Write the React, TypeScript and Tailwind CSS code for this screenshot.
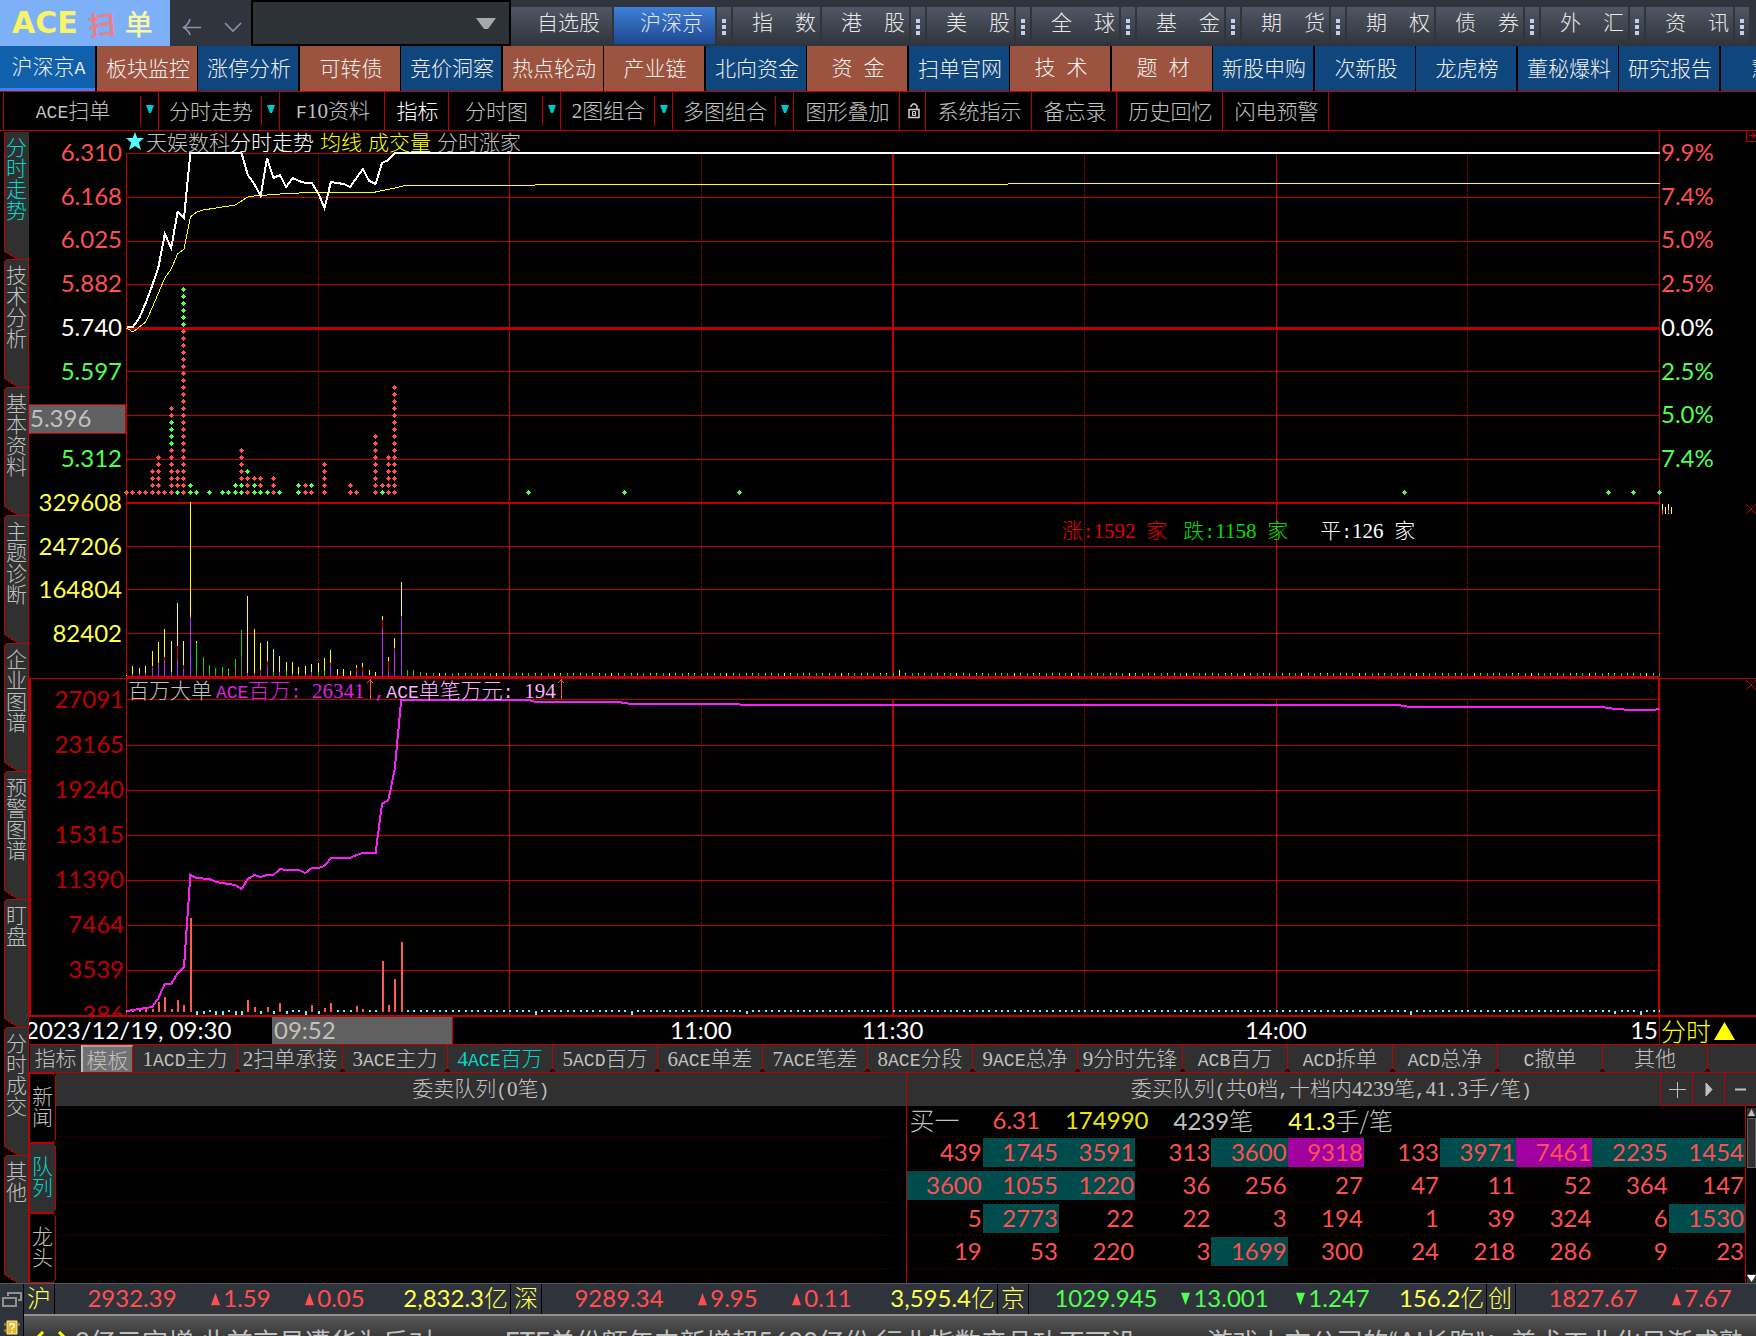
import { Fragment } from 'react'
import clsx from 'clsx'

const X_STEP = 1533 / 240
const W = 1534

const RED = '#c00000'
const VOL: Record<string, string> = { Y: '#ffff00', G: '#00e000', P: '#b030ff', R: '#e00000', O: '#708000' }

// ── Price pane data: [minute, y] ────────────────────────
const PRICE: [number, number][] = [
  [0, 196], [1, 196], [2, 187], [3, 172], [4, 155], [5, 136], [6, 103], [7, 117], [8, 81], [9, 87], [10, 22], [18, 22],
  [19, 44], [20, 53], [21, 65], [22, 27], [23, 47], [24, 44], [25, 56], [26, 47], [27, 50], [28, 52], [29, 52], [30, 62],
  [31, 77], [32, 51], [33, 52], [34, 53], [35, 56], [36, 47], [37, 38], [38, 50], [39, 53], [40, 32], [41, 29], [42, 22],
  [240, 22],
]
const AVERAGE: [number, number][] = [
  [0, 197], [1, 201], [2, 196], [3, 191], [4, 177], [5, 162], [6, 147], [7, 138], [8, 123], [9, 118], [10, 86], [11, 81],
  [12, 79], [14, 77], [17, 74], [19, 66], [20, 65], [24, 63], [30, 61], [39, 61], [42, 57], [44, 54], [64, 54],
  [65, 53], [138, 53], [140, 52], [240, 52],
]
const DOTS: [number, string][] = [
  [0, 'R'], [1, 'R'], [2, 'R'], [3, 'R'], [4, 'RRRR'], [5, 'RRRRRR'], [6, 'R'], [7, 'RRRRRRRGGGGRR'], [8, 'GRRR'],
  [9, 'R'.repeat(24) + 'GGGGGG'], [10, 'GG'], [11, 'G'], [13, 'G'], [15, 'G'], [16, 'G'], [17, 'GG'], [18, 'GGRRRRR'],
  [19, 'RRRG'], [20, 'GGR'], [21, 'GRR'], [22, 'G'], [23, 'RRR'], [24, 'G'], [27, 'GG'], [28, 'RR'], [29, 'RG'],
  [31, 'RRRRR'], [35, 'RR'], [36, 'R'], [39, 'RRRRRRRRR'], [40, 'GR'], [41, 'RRRRRR'], [42, 'R'.repeat(16)],
  [63, 'G'], [78, 'G'], [96, 'G'], [200, 'G'], [232, 'G'], [236, 'G'], [240, 'G'],
]

// ── Volume pane: stacked tops per minute ────────────────
const VOLUME: [number, [string, number][]][] = [
  [0, [['Y', 1]]], [1, [['G', 2], ['Y', 10]]], [2, [['P', 3], ['Y', 8]]], [3, [['P', 3], ['Y', 10]]],
  [4, [['P', 8], ['R', 10], ['Y', 25]]], [5, [['P', 12], ['R', 13], ['Y', 34]]], [6, [['P', 16], ['R', 19], ['Y', 47]]],
  [7, [['P', 4], ['Y', 35]]], [8, [['P', 17], ['R', 30], ['Y', 73]]], [9, [['P', 7], ['R', 11], ['Y', 35]]],
  [10, [['P', 59], ['Y', 174]]], [11, [['O', 8], ['G', 33], ['Y', 35]]], [12, [['O', 5], ['G', 19]]],
  [13, [['O', 3], ['G', 11]]], [14, [['O', 3], ['G', 8]]], [15, [['O', 4], ['G', 9]]], [16, [['G', 6], ['Y', 7]]],
  [17, [['O', 8], ['G', 17]]], [18, [['O', 20], ['G', 46]]], [19, [['P', 3], ['Y', 80]]], [20, [['P', 3], ['Y', 47]]],
  [21, [['P', 2], ['R', 6], ['Y', 33]]], [22, [['P', 9], ['R', 15], ['Y', 35]]], [23, [['G', 4], ['Y', 27]]],
  [24, [['P', 4], ['Y', 20]]], [25, [['G', 5], ['Y', 14]]], [26, [['P', 2], ['Y', 14]]], [27, [['G', 2], ['Y', 9]]],
  [28, [['P', 2], ['Y', 10]]], [29, [['P', 4], ['Y', 12]]], [30, [['G', 4], ['Y', 13]]], [31, [['G', 5], ['Y', 18]]],
  [32, [['P', 11], ['R', 13], ['Y', 26]]], [33, [['R', 1], ['Y', 7]]], [34, [['Y', 7]]], [35, [['P', 1], ['Y', 5]]],
  [36, [['P', 4], ['R', 8], ['Y', 11]]], [37, [['P', 4], ['R', 9], ['Y', 13]]], [38, [['R', 1], ['Y', 6]]],
  [39, [['Y', 4]]], [40, [['P', 48], ['R', 56], ['Y', 60]]], [41, [['P', 6], ['R', 15], ['Y', 19]]],
  [42, [['P', 26], ['R', 28], ['Y', 38]]], [43, [['P', 59], ['R', 60], ['Y', 94]]], [44, [['G', 6]]], [45, [['G', 6]]],
  [46, [['G', 4]]],
]

// ── Big-order pane ──────────────────────────────────────
const ORDERS: [number, number][] = [
  [0, 333], [1, 332], [2, 331], [3, 330], [4, 329], [5, 320], [6, 306], [7, 306], [8, 295], [9, 289], [10, 197], [11, 200],
  [13, 201], [14, 204], [16, 206], [17, 207], [18, 211], [19, 201], [20, 197], [21, 199], [22, 197], [23, 197], [24, 191],
  [25, 192], [27, 192], [28, 195], [29, 190], [30, 190], [31, 188], [32, 180], [35, 180], [36, 177], [37, 175], [39, 175],
  [40, 126], [41, 122], [42, 91], [43, 22], [63, 22], [64, 24], [77, 24], [79, 26], [95, 26], [97, 27], [199, 27],
  [201, 29], [231, 29], [233, 31], [236, 32], [239, 32], [240, 31],
]
const ORDER_BARS: [number, number][] = [
  [1, 3], [2, 2], [3, 3], [4, 3], [5, 10], [6, 15], [7, 3], [8, 12], [9, 7], [10, 94], [19, 12], [20, 5], [22, 5], [24, 9],
  [29, 7], [31, 4], [32, 9], [36, 6], [37, 3], [40, 51], [41, 7], [42, 33], [43, 70],
]
const ORDER_DIPS: Record<number, number> = {
  11: 5, 12: 3, 14: 4, 15: 4, 17: 4, 18: 5, 21: 3, 23: 3, 25: 3, 28: 5, 30: 3, 64: 5, 79: 4, 97: 3, 201: 4, 233: 3, 237: 4,
}

const MARKETS = [
  { name: '自选股', wide: true },
  { name: '沪深京', wide: true, active: true, dots: true },
  { name: '指数' },
  { name: '港股', dots: true },
  { name: '美股', dots: true },
  { name: '全球', dots: true },
  { name: '基金', dots: true },
  { name: '期货', dots: true },
  { name: '期权' },
  { name: '债券', dots: true },
  { name: '外汇', dots: true },
  { name: '资讯', dots: true },
]

const BOARDS = [
  ['沪深京A', 'active'], ['板块监控', 'brown'], ['涨停分析', 'blue'], ['可转债', 'brown'], ['竞价洞察', 'blue'],
  ['热点轮动', 'brown'], ['产业链', 'brown'], ['北向资金', 'blue'], ['资 金', 'brown'], ['扫单官网', 'blue'],
  ['技 术', 'brown'], ['题 材', 'brown'], ['新股申购', 'blue'], ['次新股', 'blue'], ['龙虎榜', 'blue'],
  ['董秘爆料', 'blue'], ['研究报告', 'blue'], ['慧博', 'blue'],
]

const TOOLS = [
  { name: 'ACE扫单', width: 'w-[156px]', menu: true },
  { name: '分时走势', width: 'w-[121px]', menu: true },
  { name: 'F10资料', width: 'w-[105px]' },
  { name: '指标', width: 'w-[64px]', active: true },
  { name: '分时图', width: 'w-[112px]', menu: true },
  { name: '2图组合', width: 'w-[112px]', menu: true },
  { name: '多图组合', width: 'w-[121px]', menu: true },
  { name: '图形叠加', width: 'w-[106px]' },
  { name: 'lock', width: 'w-[26px]' },
  { name: '系统指示', width: 'w-[106px]' },
  { name: '备忘录', width: 'w-[85px]' },
  { name: '历史回忆', width: 'w-[106px]' },
  { name: '闪电预警', width: 'w-[106px]' },
]

const SIDE_TABS = ['分时走势', '技术分析', '基本资料', '主题诊断', '企业图谱', '预警图谱', '盯盘', '分时成交', '其他']
const TEMPLATES = [
  '1ACD主力', '2扫单承接', '3ACE主力', '4ACE百万', '5ACD百万', '6ACE单差', '7ACE笔差', '8ACE分段', '9ACE总净',
  '9分时先锋', 'ACB百万', 'ACD拆单', 'ACD总净', 'C撤单', '其他',
]

const AXIS_LEFT = [
  ['6.310', 'text-[#ff5050]'], ['6.168', 'text-[#ff5050]'], ['6.025', 'text-[#ff5050]'], ['5.882', 'text-[#ff5050]'],
  ['5.740', 'text-white'], ['5.597', 'text-[#50ff50]'], ['', ''], ['5.312', 'text-[#50ff50]'],
  ['329608', 'text-[#ffff50]'], ['247206', 'text-[#ffff50]'], ['164804', 'text-[#ffff50]'], ['82402', 'text-[#ffff50]'],
]
const AXIS_RIGHT = [
  ['9.9%', 'text-[#ff5050]'], ['7.4%', 'text-[#ff5050]'], ['5.0%', 'text-[#ff5050]'], ['2.5%', 'text-[#ff5050]'],
  ['0.0%', 'text-white'], ['2.5%', 'text-[#50ff50]'], ['5.0%', 'text-[#50ff50]'], ['7.4%', 'text-[#50ff50]'],
  ['', ''], ['', ''], ['', ''], ['', ''],
]
const AXIS_ORDERS = ['27091', '23165', '19240', '15315', '11390', '7464', '3539', '386']

// t = large lot, p = very large lot
const QUEUE = [
  ['439', '1745t', '3591t', '313', '3600t', '9318p', '133', '3971t', '7461p', '2235t', '1454t'],
  ['3600t', '1055t', '1220t', '36', '256', '27', '47', '11', '52', '364', '147'],
  ['5', '2773t', '22', '22', '3', '194', '1', '39', '324', '6', '1530t'],
  ['19', '53', '220', '3', '1699t', '300', '24', '218', '286', '9', '23'],
]

const INDICES = [
  { name: '沪', price: '2932.39', change: '1.59', pct: '0.05', amount: '2,832.3亿', up: true, cols: 'grid-cols-[154px_64px_124px_1fr]' },
  { name: '深', price: '9289.34', change: '9.95', pct: '0.11', amount: '3,595.4亿', up: true, cols: 'grid-cols-[154px_64px_124px_1fr]' },
  { name: '京', price: '1029.945', change: '13.001', pct: '1.247', amount: '156.2亿', up: false, cols: 'grid-cols-[154px_84px_132px_1fr]' },
  { name: '创', price: '1827.67', change: '7.67', pct: '0.42', amount: '1,402.6亿', up: true, cols: 'grid-cols-[154px_64px_124px_1fr]' },
]

const toPoints = (data: [number, number][]) => data.map(([i, y]) => `${i * X_STEP + 0.5},${y}`).join(' ')

// Digits and Latin letters are set in half-width faces next to the Chinese glyphs
function Mixed({ children }: { children: string }) {
  const parts = children.match(/\d+|[\x20-\x2f\x3a-\x7e]+|[^\x20-\x7e]+/g) ?? []
  return (
    <span className="whitespace-pre">
      {parts.map((part, i) => (
        <span
          key={i}
          className={clsx(
            /^\d/.test(part) && "font-['Liberation_Serif',serif] text-[21px]",
            /^[\x20-\x2f\x3a-\x7e]/.test(part) && "font-['Liberation_Mono',monospace] text-[18px]",
          )}
        >
          {part}
        </span>
      ))}
    </span>
  )
}

function TimeGrid({ top, height }: { top: number; height: number }) {
  return (
    <>
      {[1, 2, 3, 4, 5, 6, 7].map((n) => (
        <line
          key={n}
          x1={Math.round(n * 191.6) + 0.5}
          x2={Math.round(n * 191.6) + 0.5}
          y1={top}
          y2={height}
          stroke={RED}
          strokeWidth={n === 4 ? 2 : 1}
          strokeDasharray={n % 2 ? '1 1' : undefined}
        />
      ))}
    </>
  )
}

function PriceChart() {
  return (
    <svg
      className="block h-[547px] w-full overflow-visible"
      viewBox={`0 0 ${W} 547`}
      preserveAspectRatio="none"
      shapeRendering="crispEdges"
      role="img"
      aria-label="分时走势"
    >
      <TimeGrid top={22} height={546} />
      {[22, 66, 110, 153, 240, 284, 328, 415, 458, 502].map((y) => (
        <line key={y} x1={0} x2={W} y1={y + 0.5} y2={y + 0.5} stroke={RED} />
      ))}
      <line x1={0} x2={W} y1={197.5} y2={197.5} stroke={RED} strokeWidth={3} />
      <line x1={0} x2={W} y1={372} y2={372} stroke={RED} strokeWidth={2} />
      <line x1={0} x2={W} y1={546} y2={546} stroke={RED} strokeWidth={2} />
      <line x1={0.5} x2={0.5} y1={22} y2={547} stroke={RED} />
      <line x1={1533.5} x2={1533.5} y1={0} y2={547} stroke={RED} />

      {/* ── Volume ── */}
      {VOLUME.map(([i, stack]) =>
        stack.map(([c, h], k) => {
          const base = k ? stack[k - 1][1] : 0
          return <rect key={`${i}-${k}`} x={Math.round(i * X_STEP)} y={545 - h} width={1} height={h - base} fill={VOL[c]} />
        }),
      )}
      {Array.from({ length: 194 }, (_, k) => k + 47).map((i) => (
        <Fragment key={i}>
          <rect x={Math.round(i * X_STEP)} y={543} width={1} height={2} fill={i % 9 === 4 ? VOL.Y : VOL.G} />
          <rect
            x={Math.round(i * X_STEP)}
            y={i === 121 ? 539 : 542}
            width={1}
            height={i === 121 ? 4 : 1}
            fill={i % 3 ? VOL.Y : VOL.G}
          />
        </Fragment>
      ))}

      {/* ── Order dots ── */}
      {DOTS.map(([i, column]) =>
        column.split('').map((c, row) => {
          const x = Math.round(i * X_STEP)
          const y = 361 - row * 7
          return (
            <path
              key={`${i}-${row}`}
              d={`M${x - 1} ${y - 1}h1v-1h1v1h1v1h1v1h-1v1h-1v1h-1v-1h-1v-1h-1v-1h1z`}
              fill={c === 'R' ? '#ff5050' : '#50ff50'}
            />
          )
        }),
      )}

      <polyline points={toPoints(AVERAGE)} fill="none" stroke="#ffff00" strokeWidth={1} />
      <polyline points={toPoints(PRICE)} fill="none" stroke="#ffffff" strokeWidth={2} />
    </svg>
  )
}

function OrderChart() {
  return (
    <svg
      className="block h-[338px] w-full"
      viewBox={`0 1 ${W} 338`}
      preserveAspectRatio="none"
      shapeRendering="crispEdges"
      role="img"
      aria-label="百万大单"
    >
      <TimeGrid top={21} height={338} />
      {[21, 67, 112, 157, 202, 247, 292].map((y) => (
        <line key={y} x1={0} x2={W} y1={y + 0.5} y2={y + 0.5} stroke={RED} />
      ))}
      <line x1={0.5} x2={0.5} y1={0} y2={339} stroke={RED} />
      <line x1={1533} x2={1533} y1={0} y2={339} stroke={RED} strokeWidth={2} />
      {Array.from({ length: 241 }, (_, i) => i)
        .filter((i) => !ORDER_BARS.some(([b]) => b === i))
        .map((i) => (
          <rect
            key={i}
            x={Math.round(i * X_STEP)}
            y={ORDER_DIPS[i] ? 333 : 332}
            width={2}
            height={ORDER_DIPS[i] ?? 2}
            fill="#50ffff"
          />
        ))}
      {ORDER_BARS.map(([i, h]) => (
        <rect key={i} x={Math.round(i * X_STEP)} y={334 - h} width={2} height={h} fill="#ff5a50" />
      ))}
      <polyline points={toPoints(ORDERS)} fill="none" stroke="#f820f8" strokeWidth={2} />
    </svg>
  )
}

function TopBar() {
  return (
    <header className="flex h-[46px] shrink-0 overflow-hidden bg-[#2f343d]">
      <div className="flex w-[170px] shrink-0 items-center gap-[10px] bg-[#7eb0f8] pl-[12px] leading-none">
        <span className="font-['DejaVu_Sans',sans-serif] text-[30px] font-bold text-[#f8f468]">ACE</span>
        <span className="-rotate-6 font-['Noto_Sans_CJK_SC',sans-serif] text-[27px] font-bold text-[#e8808c]">扫</span>
        <span className="font-['Noto_Sans_CJK_SC',sans-serif] text-[28px] font-medium text-[#f8f8a0]">单</span>
      </div>
      <div className="flex w-[81px] shrink-0 items-center justify-center gap-[22px] pt-[8px] pl-[3px]">
        <button aria-label="后退">
          <svg width="20" height="18" viewBox="0 0 20 18" fill="none" stroke="#8a93aa" strokeWidth="1.6">
            <path d="M19 9.500H2M8 1C7 5 4 8 1.500 9.500C4 11 7 13 8 17" />
          </svg>
        </button>
        <button aria-label="更多">
          <svg width="18" height="12" viewBox="0 0 18 12" fill="none" stroke="#8a93aa" strokeWidth="1.600">
            <path d="M1 2L9 10L17 2" />
          </svg>
        </button>
      </div>
      <div className="relative w-[260px] shrink-0 border-2 border-black bg-[#2d3236]">
        <select aria-label="代码" className="h-full w-full appearance-none bg-transparent" defaultValue="">
          <option value=""></option>
        </select>
        <svg className="pointer-events-none absolute top-[16px] right-[13px]" width="20" height="11" viewBox="0 0 20 11">
          <path d="M0 0H20L12 11H8Z" fill="#a8a8a8" />
        </svg>
      </div>
      <nav className="flex grow gap-[2px] pt-[7px] pb-[2px]">
        {MARKETS.map((m) => (
          <Fragment key={m.name}>
            <button
              className={clsx(
                'flex h-[37px] shrink-0 items-center pb-[7px] text-[21px] text-[#e8e8e8]',
                m.wide ? 'w-[101px] justify-end pr-[12px]' : 'w-[87px] justify-between pr-[4px] pl-[19px]',
                m.active ? 'bg-linear-to-b from-[#4080d8] to-[#1c4890]' : 'bg-linear-to-b from-[#505764] to-[#31353d]',
              )}
            >
              {m.wide ? m.name : m.name.split('').map((c) => <span key={c}>{c}</span>)}
            </button>
            {m.dots && (
              <button
                aria-label={`${m.name}菜单`}
                className="flex h-[37px] w-[14px] shrink-0 flex-col items-center justify-center gap-[2px] bg-linear-to-b from-[#505764] to-[#31353d] pt-[3px]"
              >
                <span className="size-[4px] bg-[#c0d0f0]" />
                <span className="size-[4px] bg-[#c0d0f0]" />
                <span className="size-[4px] bg-[#c0d0f0]" />
              </button>
            )}
          </Fragment>
        ))}
      </nav>
    </header>
  )
}

function BoardBar() {
  return (
    <nav className="flex h-[45px] shrink-0 overflow-hidden">
      {BOARDS.map(([name, tone]) => (
        <button
          key={name}
          className={clsx(
            'shrink-0 pb-[2px] pl-[2px] text-[21px] text-[#f0f0f0] odd:mr-[2px] even:mr-px',
            tone === 'active' && 'w-[95px] border-b-[3px] border-[#3a82f8] bg-[#1060ac] pb-0',
            tone === 'brown' && 'w-[100px] bg-[#9c5440]',
            tone === 'blue' && 'w-[100px] bg-[#0f467e]',
          )}
        >
          <Mixed>{name}</Mixed>
        </button>
      ))}
    </nav>
  )
}

function ToolBar() {
  return (
    <nav className="flex h-[40px] shrink-0 overflow-hidden border-y border-[#c00000] pl-[3px] text-[21px]">
      {TOOLS.map((t, i) => (
        <div key={t.name} className={clsx('flex shrink-0 items-center border-r border-[#c00000]', t.width, i === 0 && 'border-l')}>
          <button className={clsx('flex h-full grow items-center justify-center pb-px pl-[2px]', t.active ? 'text-white' : 'text-[#c0c0c0]')}>
            {t.name === 'lock' ? (
              <svg width="12" height="16" viewBox="0 0 12 16" fill="none" stroke="#d0d0d0" strokeWidth="1.500" aria-label="锁定">
                <path d="M1 6.500H11V14.500H1ZM3 4V3L5 1H7L9 3V6.500" />
                <path d="M4.500 8.500H7.500V12.500H4.500ZM6 10V11.500" strokeWidth="1" />
              </svg>
            ) : (
              <Mixed>{t.name}</Mixed>
            )}
          </button>
          {t.menu && (
            <button
              aria-label={`${t.name}菜单`}
              className="flex h-[30px] w-[18px] items-center justify-center border-l border-[#c00000] pb-[4px]"
            >
              <svg width="8" height="8" viewBox="0 0 8 8">
                <path d="M0 0H8L5 8H3Z" fill="#00c8c8" />
              </svg>
            </button>
          )}
        </div>
      ))}
    </nav>
  )
}

function SideTabs() {
  return (
    <nav className="flex w-[29px] shrink-0 flex-col pl-[4px]">
      {SIDE_TABS.map((name, i) => (
        <button
          key={name}
          className={clsx(
            'relative flex h-[128px] w-full shrink-0 justify-center pt-[5px] text-[21px] leading-[21px]',
            i === 0 ? 'text-[#00d8d0]' : 'text-[#c0c0c0]',
          )}
        >
          <svg className="absolute inset-0 h-full w-full overflow-visible" viewBox="0 0 25 128" fill="none" shapeRendering="crispEdges">
            {i === 0 ? (
              <>
                <path d="M0.500 0.500H25V134.500L0.500 120.500Z" fill="#303030" />
                <path d="M0.500 0.500V120.500L24.500 134.500" stroke={RED} />
              </>
            ) : (
              <>
                <path d="M0.500 2.500L2.500 0.500H24.500V128H14L0.500 119.500Z" fill="#303030" />
                <path d="M13 127.500L0.500 119.500V2.500L2.500 0.500H24.500V128" stroke={RED} />
              </>
            )}
          </svg>
          <span className="relative w-[21px]">{name}</span>
        </button>
      ))}
    </nav>
  )
}

function CloseMark({ label }: { label: string }) {
  return (
    <button aria-label={label} className="block">
      <svg width="10" height="10" viewBox="0 0 10 10" stroke={RED} fill="none">
        <path d="M0 0L10 10M10 0L0 10" />
      </svg>
    </button>
  )
}

function UpMark() {
  return (
    <svg className="mx-[2px]" width="6" height="20" viewBox="0 0 6 20" stroke="#ff5050" fill="none" shapeRendering="crispEdges">
      <path d="M3 0V20M0 4L3 1L6 4" />
    </svg>
  )
}

function Charts() {
  return (
    <>
      <section className="relative flex h-[547px] shrink-0 font-['Lato',sans-serif] text-[24px] leading-none font-normal">
        <div className="flex w-[97px] shrink-0 flex-col pr-[4px] pb-[22px] text-right">
          {AXIS_LEFT.map(([value, color], i) => (
            <span key={i} className={clsx('flex flex-1 items-center justify-end pb-[2px]', color)}>{value}</span>
          ))}
        </div>
        {/* Crosshair price */}
        <div className="absolute top-[273px] left-0 flex h-[30px] w-[97px] items-center border border-l-0 border-[#c00000] bg-[#606060] pb-[2px] pl-px text-[#c0c0c0]">
          5.396
        </div>
        <div className="relative grow">
          <PriceChart />
          <div className="absolute top-0 left-0 flex items-center gap-[6px] font-['Noto_Sans_CJK_SC',sans-serif] text-[21px] leading-[20px] font-light text-[#c0c0c0]">
            <div className="flex items-center">
              <svg className="mr-[2px]" width="18" height="20" viewBox="0 0 18 18">
                <path d="M9 0L11.300 6H18L12.800 10.500L15 18L9 14L3 18L5.200 10.500L0 6H6.700Z" fill="#50ffff" />
              </svg>
              <span>天娱数科</span>
              <span className="text-white">分时走势</span>
            </div>
            <span className="text-[#ffff00]">均线</span>
            <span className="text-[#ffff00]">成交量</span>
            <span>分时涨家</span>
          </div>
          <div className="absolute top-[386px] left-[61%] flex gap-[16px] font-['Noto_Sans_CJK_SC',sans-serif] text-[21px] leading-[24px] font-light">
            <span className="text-[#e80000]"><Mixed>涨:1592 家</Mixed></span>
            <span className="text-[#00e000]"><Mixed>跌:1158 家</Mixed></span>
            <span className="pl-[16px] text-white"><Mixed>平:126 家</Mixed></span>
          </div>
        </div>
        <div className="relative flex w-[96px] shrink-0 flex-col pb-[22px] pl-px">
          {AXIS_RIGHT.map(([value, color], i) => (
            <span key={i} className={clsx('flex flex-1 items-center pb-[2px]', color)}>{value}</span>
          ))}
          <button aria-label="展开" className="absolute top-0 right-0">
            <svg width="10" height="11" viewBox="0 0 10 11" fill="none" stroke={RED} shapeRendering="crispEdges">
              <path d="M0.500 0V10.500H10M3 4.500H9M6.500 2L9 4.500L6.500 7" />
            </svg>
          </button>
          <svg className="absolute top-[373px] left-[2px]" width="10" height="10" viewBox="0 0 10 10" shapeRendering="crispEdges">
            <path d="M0 0h1v6h-1zM3 3h1v4h-1zM6 0h1v6h-1zM9 3h1v7h-1z" fill="#ffff50" />
            <path d="M0 6h1v4h-1zM6 6h1v4h-1z" fill="#ff5050" />
            <path d="M3 7h1v3h-1z" fill="#ffffa0" />
          </svg>
          <div className="absolute top-[373px] right-0">
            <CloseMark label="关闭成交量" />
          </div>
        </div>
      </section>

      <section className="flex h-[339px] shrink-0 overflow-hidden border-t border-b-2 border-[#c00000] font-['Lato',sans-serif] text-[24px] leading-none font-normal">
        <div className="w-[97px] shrink-0 border-l-2 border-[#c00000] pr-[2px] text-right text-[#c00000]">
          {AXIS_ORDERS.map((value) => (
            <div key={value} className="flex h-[45px] items-center justify-end pb-[6px]">{value}</div>
          ))}
        </div>
        <div className="relative grow">
          <OrderChart />
          <div className="absolute top-0 left-[2px] flex font-['Noto_Sans_CJK_SC',sans-serif] text-[21px] leading-[20px] font-light text-[#c0c0c0]">
            <span className="mr-[4px]">百万大单</span>
            <span className="text-[#e020e0]"><Mixed>ACE百万: 26341</Mixed></span>
            <UpMark />
            <span className="mr-px text-[#e020e0]"><Mixed>,</Mixed></span>
            <span className="text-[#ffb0ff]"><Mixed>ACE单笔万元: 194</Mixed></span>
            <UpMark />
          </div>
        </div>
        <div className="flex w-[96px] shrink-0 items-start justify-end pt-px">
          <CloseMark label="关闭百万大单" />
        </div>
      </section>

      {/* ── Time axis ── */}
      <div className="flex h-[27px] shrink-0 overflow-hidden font-['Lato',sans-serif] text-[24px] leading-[25px] font-normal text-white">
        <div className="w-[97px] shrink-0">
          <span className="-ml-[4px] whitespace-nowrap">2023/12/19, 09:30</span>
        </div>
        <div className="flex grow overflow-x-clip border-r border-[#c00000]">
          <div className="flex-[5]">
            <div className="ml-[146px] h-[27px] w-[181px] border-r border-[#c00000] bg-[#606060] pl-[2px] text-[#c0c0c0]">09:52</div>
          </div>
          <span className="flex-[2] text-center">11:00</span>
          <span className="flex-[2] text-center">11:30</span>
          <span className="flex-[2]" />
          <span className="flex-[2] text-center">14:00</span>
          <span className="flex-[2]" />
          <span className="min-w-0 flex-[1] overflow-hidden whitespace-nowrap">
            <span className="block pl-[67px]">15:00</span>
          </span>
        </div>
        <button className="flex w-[96px] shrink-0 items-center gap-[3px] pl-px font-['Noto_Sans_CJK_SC',sans-serif] text-[25px] leading-none font-light text-[#ffff00]">
          分时
          <svg width="21" height="18" viewBox="0 0 21 18">
            <path d="M10.500 0L21 18H0Z" fill="#ffff00" />
          </svg>
        </button>
      </div>
    </>
  )
}

function TemplateTabs() {
  return (
    <nav className="flex h-[29px] shrink-0 overflow-hidden border-y border-[#c00000] bg-[#303030] text-[21px] leading-[25px] text-[#c0c0c0]">
      <button className="w-[52px] shrink-0 border-l border-[#181818] pb-[2px]">指标</button>
      <button className="w-[52px] shrink-0 border-t-2 border-r border-l-2 border-t-[#a0a0a0] border-r-[#c00000] border-l-[#c0c0c0] bg-[#707070] pb-[2px] leading-[22px]">
        模板
      </button>
      {TEMPLATES.map((name, i) => (
        <button
          key={name}
          className={clsx('relative w-[105px] shrink-0 border-r border-[#c00000] pb-[2px]', i === 3 && 'text-[#00d8d0]')}
        >
          <Mixed>{name}</Mixed>
          <svg className="absolute -right-[4px] bottom-0" width="7" height="4" viewBox="0 0 7 4">
            <path d="M3.500 0L7 4H0Z" fill="#000" stroke={RED} strokeWidth="0.600" />
          </svg>
        </button>
      ))}
    </nav>
  )
}

function DottedRow() {
  return <div className="h-[33px] bg-[linear-gradient(90deg,#700000_1px,transparent_1px)] bg-size-[4px_1px] bg-bottom bg-repeat-x" />
}

function QueuePanel() {
  const vertical = ['新闻', '队列', '龙头']
  return (
    <div className="flex h-[210px] shrink-0">
      <nav className="flex w-[27px] shrink-0 flex-col">
        {vertical.map((name) => (
          <button
            key={name}
            className={clsx(
              'relative flex flex-1 items-center justify-center text-[21px] leading-[21px]',
              name === '队列' ? 'text-[#00d8d0]' : 'text-[#c0c0c0]',
            )}
          >
            <svg className="absolute inset-0 h-full w-full" viewBox="0 0 27 70" fill="none" shapeRendering="crispEdges">
              <path
                d="M0.500 0.500H24L26.500 4V66L24 69.500H0.500Z"
                fill={name === '队列' ? '#303030' : '#000'}
                stroke={RED}
              />
            </svg>
            <span className="relative w-[21px] pb-[5px]">{name}</span>
          </button>
        ))}
      </nav>

      <section className="flex min-w-0 grow basis-0 flex-col border-r border-[#c00000]">
        <h2 className="h-[33px] bg-[#303030] text-center text-[21px] leading-[29px] font-light text-[#c0c0c0]">
          <Mixed>委卖队列(0笔)</Mixed>
        </h2>
        <div className="-mt-[2px] pr-[12px] pl-[2px]">
          {[0, 1, 2, 3, 4].map((n) => <DottedRow key={n} />)}
        </div>
      </section>

      <section className="flex min-w-0 grow basis-0 flex-col">
        <div className="relative h-[33px] shrink-0 bg-[#303030]">
          <h2 className="text-center text-[21px] leading-[29px] font-light text-[#c0c0c0]">
            <Mixed>委买队列(共0档,十档内4239笔,41.3手/笔)</Mixed>
          </h2>
          <div className="absolute top-0 right-0 flex h-[33px]">
            {['M8 15.500H25M16.500 8V24', 'M13 9L19 15.500L13 22Z', 'M10 15.500H21'].map((d, i) => (
              <button key={d} aria-label={['添加', '展开', '收起'][i]} className="w-[32px] border-b border-l border-[#c00000]">
                <svg width="31" height="31" viewBox="0 0 31 31" stroke="#c0c0c0" fill={i === 1 ? '#c0c0c0' : 'none'} strokeWidth={i === 2 ? 2 : 1}>
                  <path d={d} />
                </svg>
              </button>
            ))}
          </div>
        </div>
        <div className="flex grow font-['Lato',sans-serif] text-[24px] leading-[27px] font-normal">
          <div className="grow">
            <div className="flex h-[31px] gap-[25px] bg-[linear-gradient(90deg,#700000_1px,transparent_1px)] bg-size-[4px_1px] bg-bottom bg-repeat-x pl-[3px] text-[#c0c0c0]">
              <span className="mr-[8px] font-['Noto_Sans_CJK_SC',sans-serif] text-[25px] font-light">买一</span>
              <span className="text-[#ff5050]">6.31</span>
              <span className="text-[#e8e800]">174990</span>
              <span>4239<span className="font-['Noto_Sans_CJK_SC',sans-serif] font-light">笔</span></span>
              <span className="pl-[10px]">
                <span className="text-[#ffff50]">41.3</span>
                <span className="font-['Noto_Sans_CJK_SC',sans-serif] font-light">手/笔</span>
              </span>
            </div>
            <table className="w-full table-fixed border-separate border-spacing-0 text-right text-[#ff5050]">
              <tbody>
                {QUEUE.map((row, r) => (
                  <tr
                    key={r}
                    className="h-[33px] bg-[linear-gradient(90deg,#700000_1px,transparent_1px)] bg-size-[4px_1px] bg-bottom bg-repeat-x"
                  >
                    {row.map((cell, c) => (
                      <td key={c} className="p-0 align-top">
                        <div
                          className={clsx(
                            'mt-px h-[29px] pr-px',
                            cell.endsWith('t') && 'bg-[#004b4b]',
                            cell.endsWith('p') && 'bg-[#a000a0]',
                          )}
                        >
                          {parseInt(cell)}
                        </div>
                      </td>
                    ))}
                  </tr>
                ))}
              </tbody>
            </table>
          </div>
          <div className="flex w-[11px] shrink-0 flex-col justify-between border-l border-[#c00000] pt-[2px] pl-px">
            <div>
              <svg width="9" height="9" viewBox="0 0 9 9" className="bg-[#303030]">
                <path d="M4.500 1L8 8H1Z" fill="#c0c0c0" />
              </svg>
              <div className="mt-px h-[50px] border border-[#606060] bg-[#303030]" />
            </div>
            <svg width="9" height="9" viewBox="0 0 9 9" className="bg-[#303030]">
              <path d="M0 1H9L4.500 8Z" fill="#fff" />
            </svg>
          </div>
        </div>
      </section>
    </div>
  )
}

function Trend({ up, value }: { up: boolean; value: string }) {
  return (
    <span className="flex items-center justify-center gap-[3px]">
      <svg width="9" height="14" viewBox="0 0 10 14" className="mt-[3px] shrink-0">
        {up ? <path d="M5 0L10 14H0Z" fill="#ff5050" /> : <path d="M0 0H10L5 14Z" fill="#50ff50" />}
      </svg>
      {value}
    </span>
  )
}

function StatusBar() {
  return (
    <footer className="flex shrink-0 border-t border-[#585858] bg-[#2f333b]">
      <div className="flex w-[24px] shrink-0 flex-col items-center gap-[12px] border-r border-black pt-[7px]">
        <svg width="20" height="17" viewBox="0 0 20 17" fill="none" stroke="#909090" strokeWidth="2">
          <path d="M6 5V2H19V9H16" />
          <path d="M1 7H14V15H1Z" />
        </svg>
        <svg width="16" height="16" viewBox="0 0 16 16">
          <path d="M3 1H13V14H3Z" fill="#e8b820" stroke="#fff0a0" />
          <path d="M1 3V6M1 9V12M15 3V6" stroke="#e8b820" />
          <path d="M6 5.500V4H10V7L8 8.500V9.500M8 11V12.500" stroke="#fff" strokeWidth="1.500" fill="none" />
        </svg>
      </div>
      <div className="min-w-0 grow">
        <div className="flex h-[30px] overflow-hidden font-['Lato',sans-serif] text-[24px] leading-[26px] font-normal">
          {INDICES.map((x) => (
            <div key={x.name} className="flex w-[487px] shrink-0">
              <span className="w-[31px] shrink-0 border-r border-black text-center font-['Noto_Sans_CJK_SC',sans-serif] font-light text-[#ffff50]">
                {x.name}
              </span>
              <div
                className={clsx(
                  'grid grow items-center border-r border-black pb-[3px] text-center',
                  x.cols,
                  x.up ? 'text-[#ff5050]' : 'text-[#50ff50]',
                )}
              >
                <span>{x.price}</span>
                <Trend up={x.up} value={x.change} />
                <Trend up={x.up} value={x.pct} />
                <span className="justify-self-end pr-[2px] whitespace-nowrap text-[#ffff50]">
                  {x.amount.slice(0, -1)}
                  <span className="font-['Noto_Sans_CJK_SC',sans-serif] font-light">亿</span>
                </span>
              </div>
            </div>
          ))}
        </div>
        {/* ── Scrolling news ── */}
        <div className="flex h-[40px] items-start gap-[70px] overflow-hidden border-t-2 border-[#909090] bg-linear-to-b from-[#585858] to-[#202020] pt-[11px] pl-[10px] font-['Lato','Noto_Sans_CJK_SC',sans-serif] text-[26px] leading-[30px] font-normal whitespace-nowrap text-[#c0c0c0]">
          <div className="flex gap-[7px]">
            <svg width="34" height="16" viewBox="0 0 34 16" fill="none" stroke="#ffff00" strokeWidth="3" className="mt-[4px]">
              <path d="M9 1L2 8L9 15M25 1L32 8L25 15" />
            </svg>
            <a href="#news-1">9亿元定增 此前交易遭华为反对</a>
          </div>
          <a href="#news-2">ETF单份额年内新增超5600亿份 行业指数产品功不可没</a>
          <a href="#news-3">游戏上市公司的“AI长跑”：美术工业化日渐成熟</a>
        </div>
      </div>
    </footer>
  )
}

export default function App() {
  return (
    <div className="flex h-screen flex-col overflow-hidden bg-black font-['Noto_Sans_CJK_SC',sans-serif] font-light">
      <TopBar />
      <BoardBar />
      <ToolBar />
      <div className="flex h-[1152px] shrink-0">
        <SideTabs />
        <main className="flex min-w-0 grow flex-col">
          <Charts />
          <TemplateTabs />
          <QueuePanel />
        </main>
      </div>
      <StatusBar />
    </div>
  )
}
